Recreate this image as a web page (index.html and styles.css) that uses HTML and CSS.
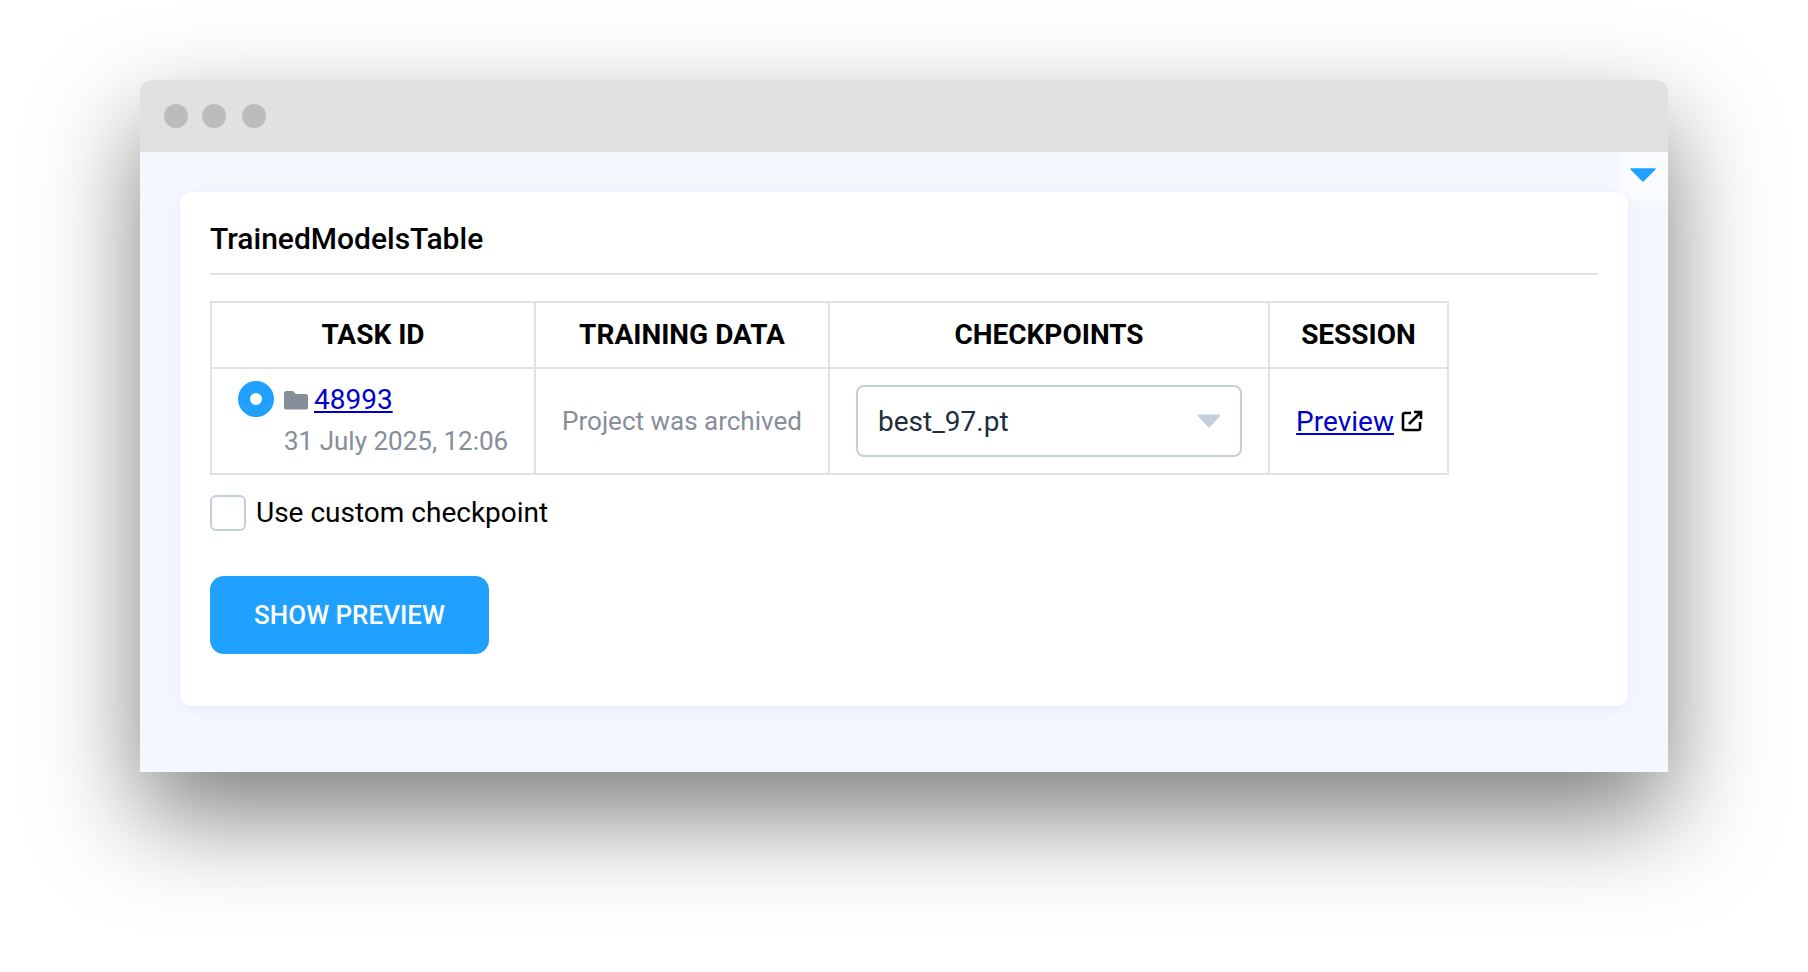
FILE: index.html
```html
<!DOCTYPE html>
<html lang="en">
<head>
    <meta charset="UTF-8">
    <title>TrainedModelsTable</title>
    <link rel="stylesheet" href="styles.css">
</head>
<body>
    <div class="window">
        <div class="titlebar">
            <span class="dot"></span>
            <span class="dot dot-second"></span>
            <span class="dot dot-third"></span>
        </div>
        <div class="content">
            <div class="collapse-tab">
                <svg width="26" height="14" viewBox="0 0 26 14"><path d="M1 1H25L13 13Z" fill="#20a0ff" stroke="#20a0ff" stroke-width="1.5" stroke-linejoin="round"/></svg>
            </div>
            <div class="card">
                <h2 class="card-title">TrainedModelsTable</h2>
                <table class="models-table">
                    <thead>
                        <tr>
                            <th class="col-task">TASK ID</th>
                            <th class="col-data">TRAINING DATA</th>
                            <th class="col-checkpoints">CHECKPOINTS</th>
                            <th class="col-session">SESSION</th>
                        </tr>
                    </thead>
                    <tbody>
                        <tr>
                            <td>
                                <div class="task-cell">
                                    <span class="radio"></span>
                                    <div class="task-info">
                                        <div class="task-link">
                                            <svg class="folder" width="24" height="20" viewBox="0 0 24 20"><path d="M2.500 1H9l3 3h9.500A2.500 2.500 0 0 1 24 6.500V17a2.500 2.500 0 0 1-2.500 2.500h-19A2.500 2.500 0 0 1 0 17V3.500A2.500 2.500 0 0 1 2.500 1Z" fill="#868e99"/></svg>
                                            <a href="#">48993</a>
                                        </div>
                                        <div class="task-date">31 July 2025, 12:06</div>
                                    </div>
                                </div>
                            </td>
                            <td class="muted">Project was archived</td>
                            <td class="select-cell">
                                <div class="select">
                                    <span>best_97.pt</span>
                                    <svg class="select-arrow" width="24" height="14" viewBox="0 0 24 14"><path d="M2 1.500H22L12 12.500Z" fill="#c3cfdc" stroke="#c3cfdc" stroke-width="2" stroke-linejoin="round"/></svg>
                                </div>
                            </td>
                            <td class="session-cell">
                                <a href="#">Preview</a>
                                <svg class="external" width="22" height="22" viewBox="0 0 22 22" fill="none" stroke="#000" stroke-width="2.600"><path d="M10 3H3.500A1.500 1.500 0 0 0 2 4.500V18.500A1.500 1.500 0 0 0 3.500 20H17.500A1.500 1.500 0 0 0 19 18.500V12"/><path d="M8 14 19.500 2.500M13 2H20V9"/></svg>
                            </td>
                        </tr>
                    </tbody>
                </table>
                <label class="checkbox-row">
                    <span class="checkbox"></span>
                    <span class="checkbox-text">Use custom checkpoint</span>
                </label>
                <button class="btn">SHOW PREVIEW</button>
            </div>
        </div>
    </div>
</body>
</html>
```

FILE: styles.css
```css
:root {
    --primary-color: #20a0ff;
    --line-color: #dfe3e6;
    --muted-color: #868e99;
    --control-border: #c3cfdc;
}

html,
body {
    height: 100%;
}

body {
    background-color: #fff;
    margin: 0;
    padding: 80px 140px 0;
    box-sizing: border-box;
    overflow: hidden;
    font-family: 'Roboto', sans-serif;
    font-size: 26px;
    color: #000;
}

.window {
    height: 692px;
    border-radius: 12px 12px 0 0;
    box-shadow: 0 44px 100px rgba(0, 0, 0, 0.5);
}

.titlebar {
    height: 72px;
    background-color: #e1e1e1;
    border-radius: 12px 12px 0 0;
    display: flex;
    align-items: center;
    padding-left: 24px;
}

.dot {
    width: 24px;
    height: 24px;
    border-radius: 50%;
    background-color: #bcbcbc;
}

.dot-second {
    margin-left: 14px;
}

.dot-third {
    margin-left: 16px;
}

.content {
    position: relative;
    height: 620px;
    box-sizing: border-box;
    padding: 40px;
    background-color: #f4f7fe;
}

.collapse-tab {
    position: absolute;
    top: 0;
    right: 0;
    width: 48px;
    height: 49px;
    box-sizing: border-box;
    padding: 16px 0 0 10px;
    background-color: #f9fbff;
    border-bottom-left-radius: 8px;
}

.collapse-tab svg {
    display: block;
}

.card {
    position: relative;
    height: 514px;
    box-sizing: border-box;
    padding: 0 30px;
    background-color: #fff;
    border-radius: 12px;
    box-shadow: 0 3px 14px rgba(80, 90, 190, 0.07);
}

.card-title {
    margin: 0 0 26px;
    height: 83px;
    box-sizing: border-box;
    padding-top: 29px;
    line-height: 36px;
    font-size: 30px;
    font-weight: 500;
    border-bottom: 2px solid #e3e4ea;
}

.models-table {
    border-collapse: collapse;
    table-layout: fixed;
    width: 1237px;
}

.models-table th,
.models-table td {
    border: 2px solid var(--line-color);
    padding: 0;
}

.models-table th {
    height: 62px;
    padding-bottom: 2px;
    font-size: 28px;
    font-weight: 700;
    text-align: center;
}

.models-table td {
    height: 104px;
    text-align: center;
}

.col-task {
    width: 322px;
}

.col-data {
    width: 292px;
}

.col-checkpoints {
    width: 438px;
}

.col-session {
    width: 177px;
}

a {
    color: #0000cc;
}

.task-cell {
    display: flex;
    padding: 12px 0 0 26px;
    height: 100%;
    box-sizing: border-box;
    text-align: left;
}

.radio {
    flex-shrink: 0;
    width: 12px;
    height: 12px;
    border: 12px solid var(--primary-color);
    border-radius: 50%;
    background-color: #fff;
    margin-right: 10px;
}

.task-link {
    display: flex;
    align-items: center;
    gap: 6px;
    margin-top: 2px;
    line-height: 34px;
    font-size: 28px;
}

.task-date {
    margin-top: 8px;
    line-height: 32px;
    color: var(--muted-color);
}

.muted {
    color: var(--muted-color);
}

.models-table .select-cell {
    padding: 0 26px;
}

.select {
    display: flex;
    align-items: center;
    justify-content: space-between;
    height: 72px;
    box-sizing: border-box;
    padding: 0 20px;
    border: 2px solid var(--control-border);
    border-radius: 8px;
    color: #1f2d3d;
    font-size: 28px;
}

.select-arrow {
    margin-right: -1px;
}

.models-table .session-cell {
    padding-left: 2px;
    white-space: nowrap;
    font-size: 28px;
}

.external {
    vertical-align: -1px;
}

.checkbox-row {
    display: flex;
    align-items: center;
    margin-top: 20px;
    height: 36px;
    font-size: 28px;
}

.checkbox {
    width: 36px;
    height: 36px;
    box-sizing: border-box;
    border: 2px solid var(--control-border);
    border-radius: 6px;
    margin-right: 10px;
}

.checkbox-text {
    margin-top: -2px;
}

.btn {
    display: block;
    width: 279px;
    height: 78px;
    margin-top: 45px;
    border: none;
    border-radius: 14px;
    background-color: var(--primary-color);
    color: #fff;
    font-family: 'Roboto', sans-serif;
    font-size: 26px;
    font-weight: 500;
}
```
